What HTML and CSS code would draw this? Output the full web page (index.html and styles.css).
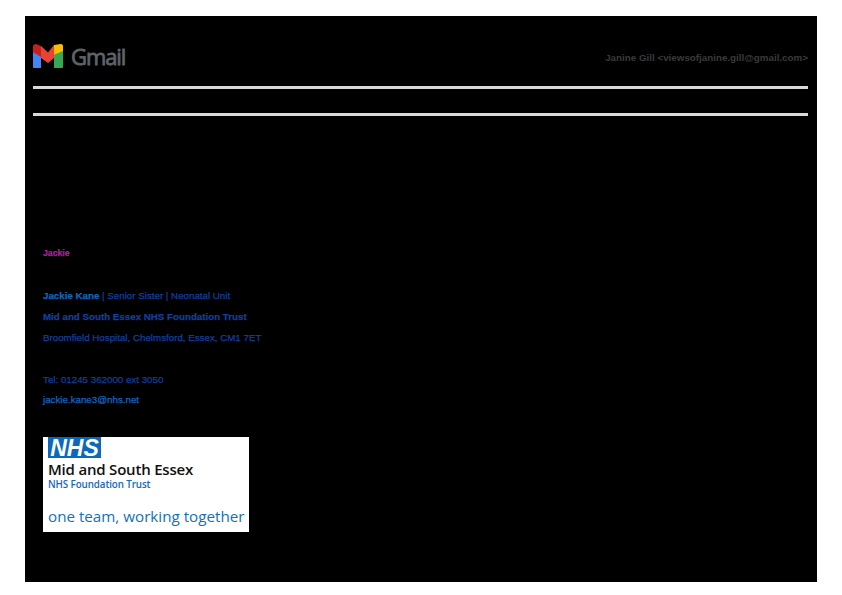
FILE: index.html
```html
<!DOCTYPE html>
<html lang="en">
<head>
<meta charset="utf-8">
<title>Gmail - Jackie</title>
<link rel="stylesheet" href="styles.css">
</head>
<body>
<main class="sheet">
  <header class="head">
    <div class="brand">
      <svg class="gmail-icon" width="30" height="24" viewBox="0 0 30 24" aria-hidden="true">
        <path fill="#4285f4" d="M0 7v16a1 1 0 0 0 1 1h7V11z"/>
        <path fill="#34a853" d="M21 11v13h8a1 1 0 0 0 1-1V6z"/>
        <path fill="#fbbc04" d="M21 1v10l9-4V2c0-1.500-1.500-2-2.500-2z"/>
        <path fill="#c5221f" d="M0 2.500V8l8 5V2L3 0C1.500 0 0 1 0 2.500z"/>
        <path fill="#ea4335" d="M8 2 15 8.500 21 1V14L15 19 8 14z"/>
      </svg>
      <span class="wordmark">Gmail</span>
    </div>
    <div class="sender">Janine Gill &lt;viewsofjanine.gill@gmail.com&gt;</div>
  </header>
  <div class="rule"></div>
  <div class="rule rule-second"></div>
  <section class="message">
    <p class="greet">Jackie</p>
    <p class="line first-line"><b class="name">Jackie Kane</b> | Senior Sister | Neonatal Unit</p>
    <p class="line"><b>Mid and South Essex NHS Foundation Trust</b></p>
    <p class="line">Broomfield Hospital, Chelmsford, Essex, CM1 7ET</p>
    <p class="line tel">Tel: 01245 362000 ext 3050</p>
    <p class="line mail">jackie.kane3@nhs.net</p>
  </section>
  <div class="logo-card">
    <div class="nhs-badge">NHS</div>
    <div class="trust">Mid and South Essex</div>
    <div class="foundation">NHS Foundation Trust</div>
    <div class="motto">one team, working together</div>
  </div>
</main>
</body>
</html>
```
FILE: styles.css
```css
html, body { margin: 0; padding: 0; background: #fff; }
body { width: 842px; height: 595px; overflow: hidden; padding: 16px 25px 13px; box-sizing: border-box; }
.sheet { width: 792px; height: 566px; background: #000; box-sizing: border-box; padding: 28px 9px 0 8px; font-family: "Liberation Sans", Arial, sans-serif; }
.head { display: flex; justify-content: space-between; align-items: center; height: 24px; }
.brand { display: flex; align-items: center; gap: 8px; }
.gmail-icon { display: block; }
.wordmark { font-family: "Open Sans", "Liberation Sans", sans-serif; font-size: 22px; line-height: 24px; letter-spacing: -1.100px; color: #5f6368; -webkit-text-stroke: .8px #5f6368; }
.sender { font-size: 9.800px; font-weight: 700; color: #3a3a3a; margin-top: 3px; }
.rule { height: 3px; background: #d9d9d9; margin-top: 18px; }
.rule-second { margin-top: 24px; }
.message { padding: 127px 0 0 10px; font-size: 9.750px; line-height: 21px; -webkit-text-stroke: .25px currentColor; }
.message p { margin: 0; }
.greet { color: #a6249c; font-size: 8.700px; font-weight: 700; }
.first-line { margin-top: 21px !important; color: #0b3f94; }
.name { color: #0b68bd; }
.line { color: #123f9c; }
.tel { margin-top: 21px !important; }
.mail { margin-top: -1px !important; color: #1565c0; }
.logo-card { width: 206px; height: 95px; margin: 27px 0 0 10px; background: #fff; box-sizing: border-box; padding-left: 5px; }
.nhs-badge { width: 53px; height: 21px; background: #0b68bd; color: #fff; font-size: 23px; line-height: 22px; font-weight: 700; font-style: italic; text-align: center; }
.trust { font-family: "Open Sans", sans-serif; font-size: 15px; font-weight: 600; line-height: 19px; color: #111; margin-top: 2px; letter-spacing: -.2px; }
.foundation { font-family: "Open Sans", sans-serif; font-size: 9.800px; font-weight: 600; line-height: 12px; color: #1668bd; letter-spacing: -.1px; }
.motto { font-family: "Open Sans", sans-serif; font-size: 15.200px; line-height: 20px; color: #1271b9; margin-top: 15px; }
```
